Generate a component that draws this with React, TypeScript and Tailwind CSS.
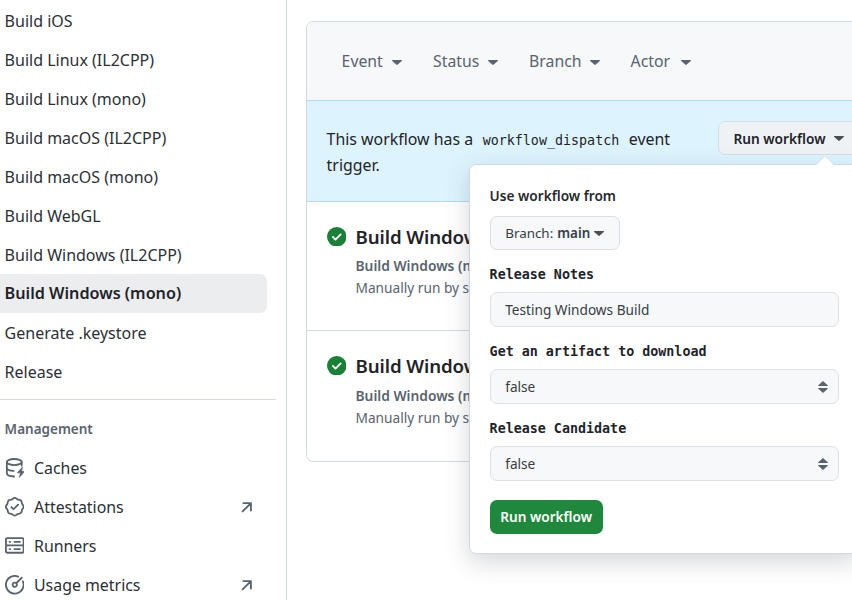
import type { ReactNode } from "react";

const workflows = [
  { name: "Build iOS" },
  { name: "Build Linux (IL2CPP)" },
  { name: "Build Linux (mono)" },
  { name: "Build macOS (IL2CPP)" },
  { name: "Build macOS (mono)" },
  { name: "Build WebGL" },
  { name: "Build Windows (IL2CPP)" },
  { name: "Build Windows (mono)", active: true },
  { name: "Generate .keystore" },
  { name: "Release" },
];

function Octicon({ children, className }: { children: ReactNode; className: string }) {
  return (
    <svg viewBox="0 0 16 16" fill="currentColor" className={className}>
      {children}
    </svg>
  );
}

const cacheIcon = (
  <>
    <g fill="none" stroke="currentColor" strokeWidth="1.5" strokeLinecap="round">
      <ellipse cx="7.6" cy="3.3" rx="6.1" ry="2.5" />
      <path d="M1.5 3.4v9.1c0 1.4 2.3 2.5 6 2.7M1.5 8c0 1.4 2.3 2.4 5.6 2.6M13.7 3.4v2.9" />
    </g>
    <path d="M14.4 7.4 9.9 12.2h2.6l-.7 3.8 4.5-5.1h-2.6z" stroke="currentColor" strokeWidth=".4" strokeLinejoin="round" />
  </>
);
const verifiedIcon = (
  <path d="m9.585.52.929.68c.153.112.331.186.518.215l1.138.175a2.678 2.678 0 0 1 2.24 2.24l.174 1.139c.029.187.103.365.215.518l.68.928a2.677 2.677 0 0 1 0 3.17l-.68.928a1.174 1.174 0 0 0-.215.518l-.175 1.138a2.678 2.678 0 0 1-2.241 2.241l-1.138.175a1.17 1.17 0 0 0-.518.215l-.928.68a2.677 2.677 0 0 1-3.17 0l-.928-.68a1.174 1.174 0 0 0-.518-.215L3.83 14.41a2.678 2.678 0 0 1-2.24-2.24l-.175-1.138a1.17 1.17 0 0 0-.215-.518l-.68-.928a2.677 2.677 0 0 1 0-3.17l.68-.928c.112-.153.186-.331.215-.518l.175-1.14a2.678 2.678 0 0 1 2.24-2.24l1.139-.175c.187-.029.365-.103.518-.215l.928-.68a2.677 2.677 0 0 1 3.17 0ZM7.303 1.728l-.927.68a2.67 2.67 0 0 1-1.18.489l-1.137.174a1.179 1.179 0 0 0-.987.987l-.174 1.136a2.677 2.677 0 0 1-.489 1.18l-.68.928a1.18 1.18 0 0 0 0 1.394l.68.927c.256.348.424.753.489 1.18l.174 1.137c.078.509.478.909.987.987l1.136.174a2.67 2.67 0 0 1 1.18.489l.928.68c.414.305.979.305 1.394 0l.927-.68a2.67 2.67 0 0 1 1.18-.489l1.137-.174a1.18 1.18 0 0 0 .987-.987l.174-1.136a2.67 2.67 0 0 1 .489-1.18l.68-.928a1.176 1.176 0 0 0 0-1.394l-.68-.927a2.686 2.686 0 0 1-.489-1.18l-.174-1.137a1.179 1.179 0 0 0-.987-.987l-1.136-.174a2.677 2.677 0 0 1-1.18-.489l-.928-.68a1.176 1.176 0 0 0-1.394 0ZM11.28 6.78l-3.75 3.75a.75.75 0 0 1-1.06 0L4.72 8.78a.751.751 0 0 1 .018-1.042.751.751 0 0 1 1.042-.018L7 8.94l3.22-3.22a.751.751 0 0 1 1.042.018.751.751 0 0 1 .018 1.042Z" />
);
const serverIcon = (
  <path d="M1.75 1h12.5c.966 0 1.75.784 1.75 1.75v4c0 .372-.116.717-.314 1 .198.283.314.628.314 1v4a1.75 1.75 0 0 1-1.75 1.75H1.75A1.75 1.75 0 0 1 0 12.75v-4c0-.358.109-.707.314-1a1.739 1.739 0 0 1-.314-1v-4C0 1.784.784 1 1.75 1ZM1.5 2.75v4c0 .138.112.25.25.25h12.5a.25.25 0 0 0 .25-.25v-4a.25.25 0 0 0-.25-.25H1.75a.25.25 0 0 0-.25.25Zm.25 5.75a.25.25 0 0 0-.25.25v4c0 .138.112.25.25.25h12.5a.25.25 0 0 0 .25-.25v-4a.25.25 0 0 0-.25-.25ZM7 4.75A.75.75 0 0 1 7.75 4h4.5a.75.75 0 0 1 0 1.5h-4.5A.75.75 0 0 1 7 4.75ZM7.75 10h4.5a.75.75 0 0 1 0 1.5h-4.5a.75.75 0 0 1 0-1.5ZM3 4.75A.75.75 0 0 1 3.75 4h.5a.75.75 0 0 1 0 1.5h-.5A.75.75 0 0 1 3 4.75ZM3.75 10h.5a.75.75 0 0 1 0 1.5h-.5a.75.75 0 0 1 0-1.5Z" />
);
const meterIcon = (
  <path d="M8 1.5a6.5 6.5 0 1 0 6.016 4.035.75.75 0 0 1 1.388-.57 8 8 0 1 1-4.37-4.37.75.75 0 1 1-.569 1.389A6.473 6.473 0 0 0 8 1.5Zm6.28.22a.75.75 0 0 1 0 1.06l-4.063 4.064a2.5 2.5 0 1 1-1.06-1.06L13.22 1.72a.75.75 0 0 1 1.06 0ZM7 8a1 1 0 1 0 2 0 1 1 0 0 0-2 0Z" />
);

const management = [
  { name: "Caches", icon: cacheIcon },
  { name: "Attestations", icon: verifiedIcon, external: true },
  { name: "Runners", icon: serverIcon },
  { name: "Usage metrics", icon: meterIcon, external: true },
];

function Caret({ className = "" }: { className?: string }) {
  return (
    <svg viewBox="0 0 10 5" fill="currentColor" className={`h-[5px] w-[10px] shrink-0 ${className}`}>
      <path d="M.6 0h8.8c.5 0 .8.5.4.9L5.4 4.8a.6.6 0 0 1-.8 0L.2.9C-.2.5.1 0 .6 0Z" />
    </svg>
  );
}

function Sidebar() {
  return (
    <nav className="h-[600px] w-[287px] shrink-0 border-r border-[#d1d9e0] pt-px">
      <ul>
        {workflows.map((w) => (
          <li
            key={w.name}
            className={
              w.active
                ? "flex h-[39px] w-[267px] items-center rounded-r-[7px] bg-[#ecedef] pl-[4.6px] text-[16.2px] font-semibold text-[#1f2328]"
                : "flex h-[39px] items-center pl-[4.6px]"
            }
          >
            {w.name}
          </li>
        ))}
      </ul>
      <div className="mt-2 h-px w-[276px] bg-[#d4dae0]" />
      <h3 className="mt-[19px] pl-[4.6px] text-[13.5px] leading-5 font-semibold text-[#59636e]">Management</h3>
      <ul className="mt-[10px]">
        {management.map((m) => (
          <li key={m.name} className="flex h-[39px] w-[267px] items-center pl-[4.5px]">
            <Octicon className="mb-px size-[19.5px] shrink-0 text-[#59636e]">{m.icon}</Octicon>
            <span className="ml-[10px] flex-1 pt-px text-[15.9px]">{m.name}</span>
            {m.external && (
              <svg viewBox="0 0 12 12" className="mr-[14px] mb-[2px] size-3 text-[#59636e]" fill="none" stroke="currentColor" strokeWidth="1.9">
                <path d="M2.4 2.1h7.5v7.5M9.7 2.3 1.6 10.4" strokeLinecap="round" strokeLinejoin="round" />
              </svg>
            )}
          </li>
        ))}
      </ul>
    </nav>
  );
}

function Filter({ label, width }: { label: string; width: string }) {
  return (
    <div className={`flex items-center justify-between ${width}`}>
      {label}
      <Caret />
    </div>
  );
}

function Run({ last }: { last?: boolean }) {
  return (
    <div className={last ? "flex h-[130px] pt-[22px] pl-[19.5px]" : "flex h-[129px] border-b border-[#d1d9e0] pt-[22px] pl-[19.5px]"}>
      <Octicon className="mt-[2.5px] size-[19.5px] shrink-0 text-[#1a7f37]">
        <circle cx="8" cy="8" r="8" />
        <path d="M4.9 8.2 7 10.3l4.2-4.2" fill="none" stroke="white" strokeWidth="1.5" strokeLinecap="round" strokeLinejoin="round" />
      </Octicon>
      <div className="ml-[9.5px] whitespace-nowrap text-[#59636e]">
        <h4 className="text-[18.7px] leading-[26px] font-semibold tracking-[-0.1px] text-[#1f2328]">Build Windows (mono)</h4>
        <p className={last ? "mt-[6px] text-[13.8px] leading-[22px] font-semibold" : "mt-[5px] text-[13.8px] leading-[22px] font-semibold"}>
          Build Windows (mono) #2:
        </p>
        <p className="text-[13.7px] leading-[22px]">Manually run by s</p>
      </div>
    </div>
  );
}

function Label({ children }: { children: ReactNode }) {
  return (
    <label className="mt-[14px] mb-[6px] block font-['DejaVu_Sans_Mono',monospace] text-[13.35px] leading-[22px] font-bold text-[#1f2328]">
      {children}
    </label>
  );
}

function Field({ value, select }: { value: string; select?: boolean }) {
  return (
    <div className="flex h-[35px] w-[349px] items-center justify-between rounded-[7px] border border-[#dde2e7] bg-[#f6f8fa] pr-[10px] pl-[14.6px] text-[#383d43]">
      <span className="pt-[1.5px]">{value}</span>
      {select && (
        <svg viewBox="0 0 10 12" fill="currentColor" className="h-3 w-[10px] text-[#59636e]">
          <path d="M5 0 9.7 4.2a.4.4 0 0 1-.3.7H.6a.4.4 0 0 1-.3-.7ZM5 12 9.7 7.8a.4.4 0 0 0-.3-.7H.6a.4.4 0 0 0-.3.7Z" />
        </svg>
      )}
    </div>
  );
}

function Popover() {
  return (
    <div className="absolute top-[164px] left-[469px] h-[390px] w-[390px] rounded-[7px] border border-[#d1d9e0] bg-white pt-5 pl-[19.6px] text-[13.65px] shadow-[0_8px_24px_rgba(66,74,83,0.22)]">
      <svg viewBox="0 0 18 9" className="absolute -top-[9px] left-[346px] h-[9px] w-[18px]">
        <path d="M0 9 9 0l9 9Z" fill="white" stroke="#d1d9e0" strokeWidth=".5" />
        <path d="M1 9 9 1l8 8Z" fill="white" />
      </svg>
      <h5 className="leading-[22px] font-semibold text-[#25292e]">Use workflow from</h5>
      <button className="mt-[9px] flex h-[34px] w-[130px] items-center rounded-[7px] border border-[#d9dfe4] bg-[#f6f8fa] pl-[14.6px] text-[13.4px] text-[#383d43]">
        <span className="mr-1">Branch:</span>
        <b className="font-semibold">main</b>
        <Caret className="ml-[4px] text-[#494f55]" />
      </button>
      <Label>Release Notes</Label>
      <Field value="Testing Windows Build" />
      <Label>Get an artifact to download</Label>
      <Field value="false" select />
      <Label>Release Candidate</Label>
      <Field value="false" select />
      <button className="mt-[19px] h-[34px] w-[113px] rounded-[7px] bg-[#1f883d] font-semibold text-white">Run workflow</button>
    </div>
  );
}

export default function App() {
  return (
    <div className="relative flex h-[600px] w-[852px] overflow-hidden bg-white font-['Noto_Sans','Open_Sans',sans-serif] text-[16px] text-[#2b3036]">
      <Sidebar />
      <main className="min-w-0 flex-1 overflow-hidden pt-[21px] pl-[19px]">
        <div className="h-[441px] w-[600px] overflow-hidden rounded-[7px] border border-[#d1d9e0]">
          <div className="flex h-[78px] items-center gap-[31px] bg-[#f6f8fa] pt-[2px] pl-[34.6px] text-[15.8px] text-[#59636e]">
            <Filter label="Event" width="w-[60.5px]" />
            <Filter label="Status" width="w-[65px]" />
            <Filter label="Branch" width="w-[70.5px]" />
            <Filter label="Actor" width="w-[60px]" />
          </div>
          <div className="flex h-[102px] items-start justify-between border-y border-[#addcfb] bg-[#ddf4ff] pl-[19.6px] text-[#1f2328]">
            <p className="w-[370px] pt-[25px] text-[15.9px] leading-[26px]">
              This workflow has a{" "}
              <code className="px-[5.4px] font-['DejaVu_Sans_Mono',monospace] text-[13.35px] leading-none">workflow_dispatch</code>{" "}
              event trigger.
            </p>
            <button className="mt-5 mr-[41px] flex h-[34px] w-[146px] items-center rounded-[7px] border border-[#d6dce1] bg-[#eff2f5] pl-[14.4px] text-[13.7px] font-semibold">
              <span className="pt-[2px]">Run workflow</span>
              <Caret className="mt-px ml-[8px] text-[#494f55]" />
            </button>
          </div>
          <Run />
          <Run last />
        </div>
      </main>
      <Popover />
    </div>
  );
}
